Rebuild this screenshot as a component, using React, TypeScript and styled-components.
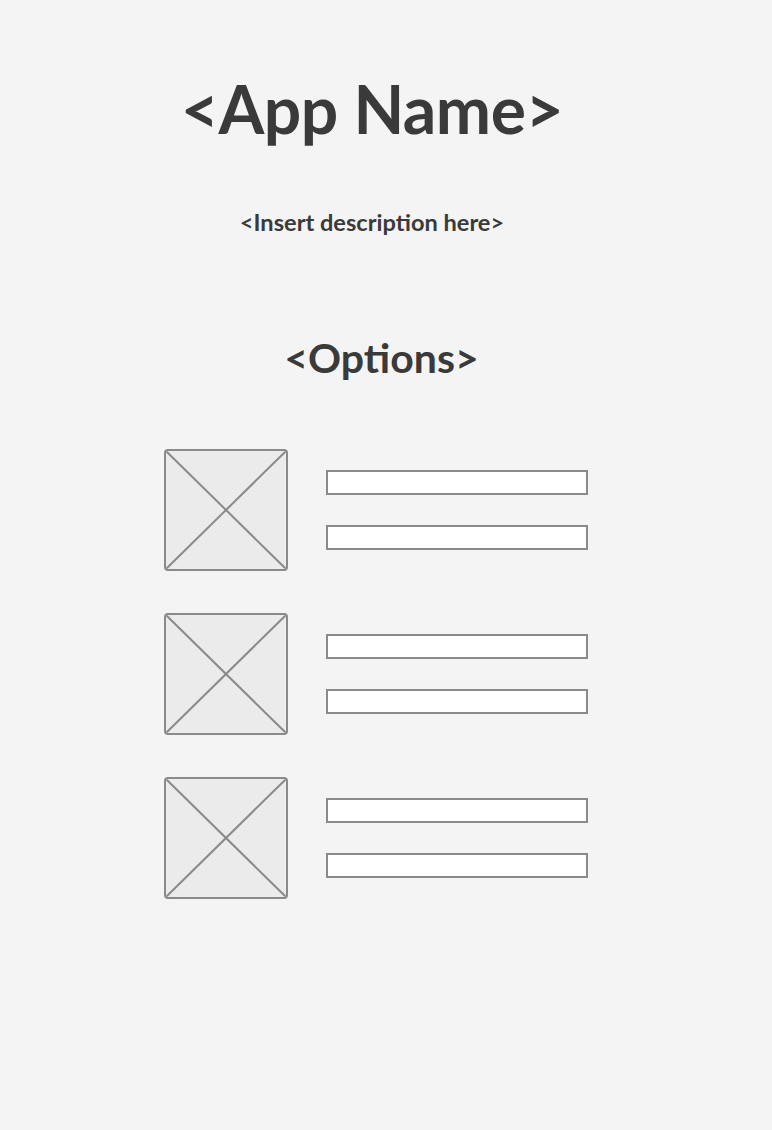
import { FC } from 'react';
import styled, { createGlobalStyle } from 'styled-components';

const GlobalStyle = createGlobalStyle`
  html, body {
    margin: 0;
    padding: 0;
    background: #f4f4f4;
  }
  body {
    font-family: Lato, "Open Sans", "Liberation Sans", sans-serif;
    color: #3a3a3a;
  }
`;

const Page = styled.div`
  width: 744px;
  height: 1130px;
  display: flex;
  flex-direction: column;
  align-items: center;
  padding-top: 69px;
  box-sizing: border-box;
`;

const Title = styled.h1`
  margin: 0;
  font-size: 66px;
  font-weight: 700;
  line-height: 80px;
  letter-spacing: -0.5px;
`;

const Description = styled.p`
  margin: 59px 0 0;
  font-size: 23.6px;
  font-weight: 700;
  line-height: 28px;
`;

const SectionTitle = styled.h2`
  margin: 98px 0 0 19px;
  font-size: 41px;
  font-weight: 700;
  line-height: 48px;
`;

const OptionList = styled.div`
  margin: 67px 0 0 8px;
  display: flex;
  flex-direction: column;
  gap: 42px;
`;

const OptionRow = styled.div`
  display: flex;
  align-items: center;
  gap: 38px;
`;

const Thumb = styled.div`
  width: 124px;
  height: 122px;
  box-sizing: border-box;
  border: 2px solid #8a8a8a;
  border-radius: 4px;
  background: #ebebeb;
  overflow: hidden;

  svg {
    display: block;
    width: 100%;
    height: 100%;
  }
`;

const Fields = styled.div`
  display: flex;
  flex-direction: column;
  gap: 30px;
`;

const Field = styled.div`
  width: 262px;
  height: 25px;
  box-sizing: border-box;
  border: 2px solid #8a8a8a;
  background: #ffffff;
`;

const Placeholder: FC = () => (
  <Thumb>
    <svg viewBox="0 0 120 118" preserveAspectRatio="none">
      <line x1="0" y1="0" x2="120" y2="118" stroke="#8a8a8a" strokeWidth="2" />
      <line x1="120" y1="0" x2="0" y2="118" stroke="#8a8a8a" strokeWidth="2" />
    </svg>
  </Thumb>
);

const options = [0, 1, 2];

const App: FC = () => (
  <>
    <GlobalStyle />
    <Page>
      <Title>&lt;App Name&gt;</Title>
      <Description>&lt;Insert description here&gt;</Description>
      <SectionTitle>&lt;Options&gt;</SectionTitle>
      <OptionList>
        {options.map((o) => (
          <OptionRow key={o}>
            <Placeholder />
            <Fields>
              <Field />
              <Field />
            </Fields>
          </OptionRow>
        ))}
      </OptionList>
    </Page>
  </>
);

export default App;
